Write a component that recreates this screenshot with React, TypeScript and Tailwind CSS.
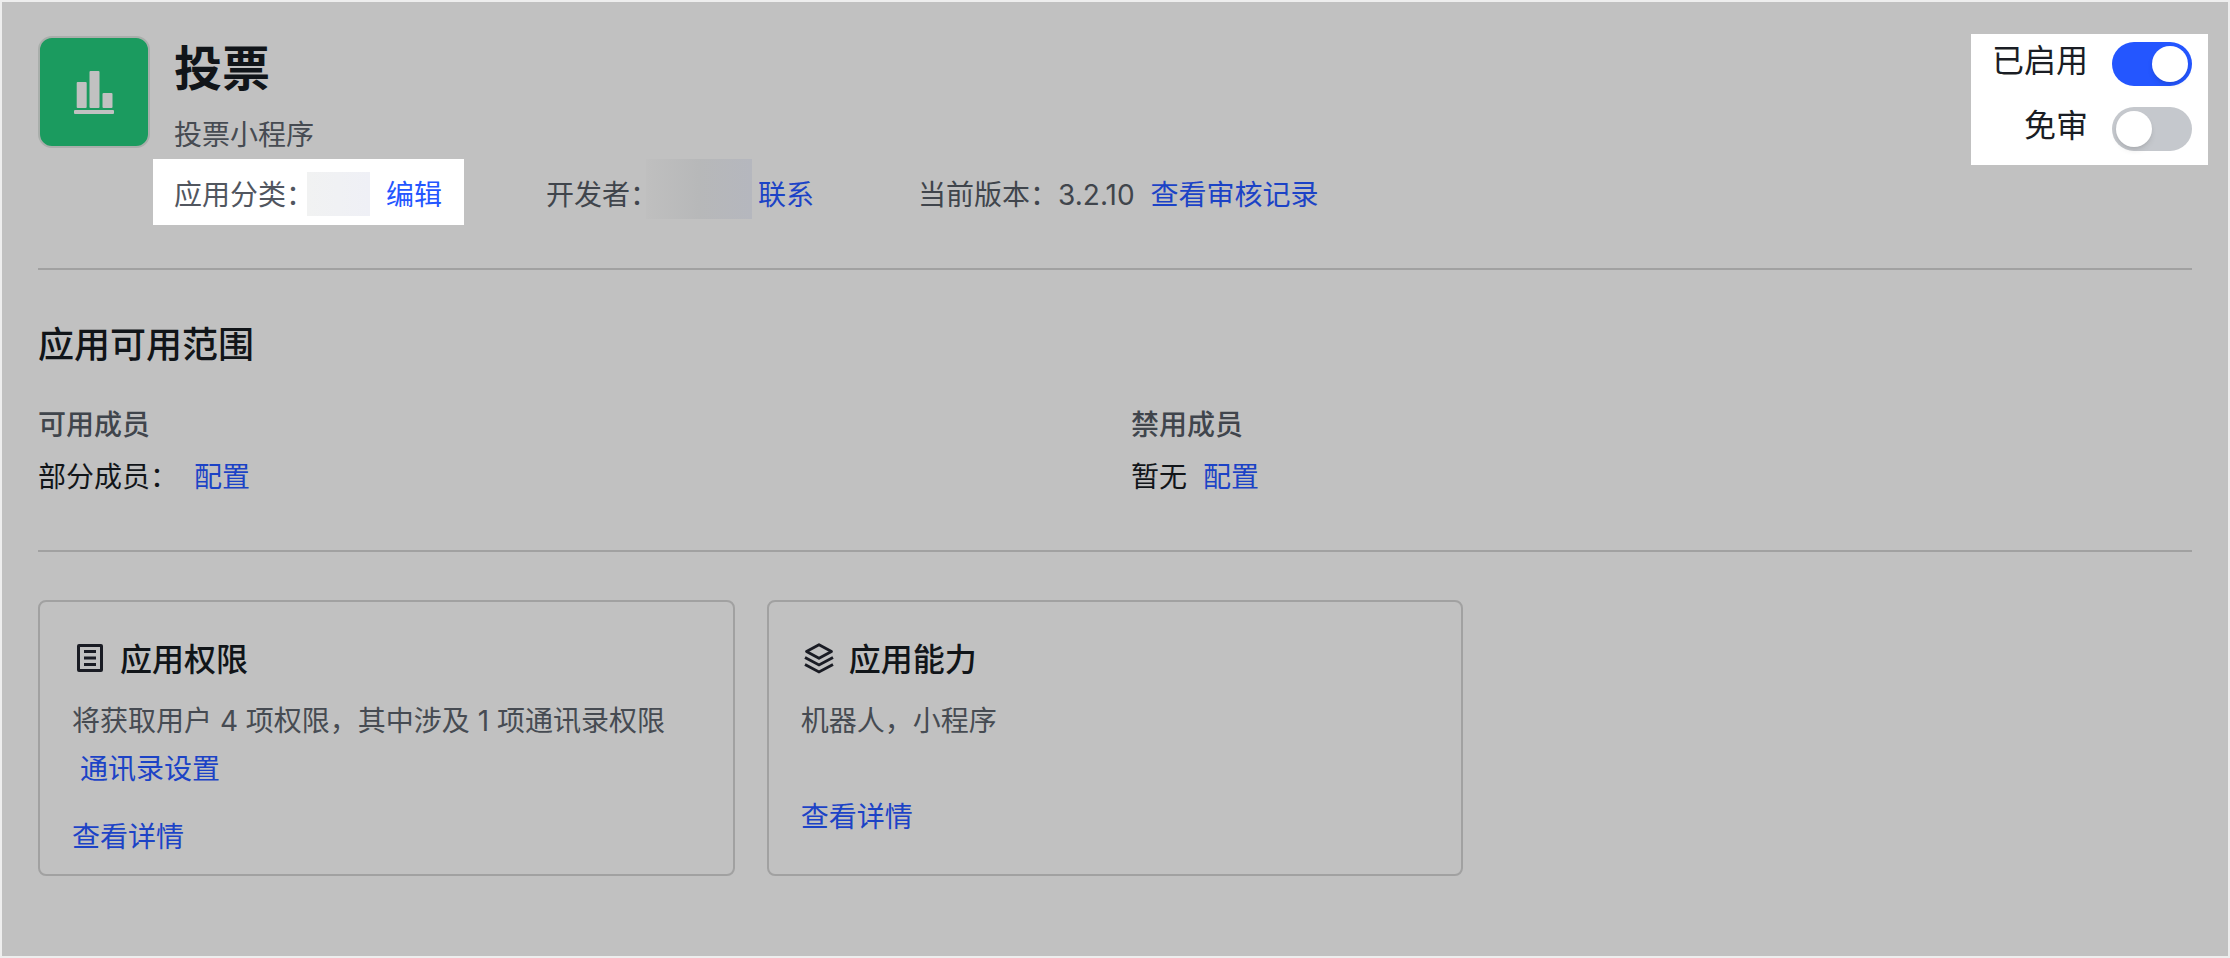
import React, { useState } from 'react';

interface TextLinkProps {
  children: React.ReactNode;
  className?: string;
}

interface SwitchRowProps {
  id: string;
  label: string;
  checked: boolean;
  onChange: (value: boolean) => void;
}

interface InfoCardProps {
  icon: React.ReactNode;
  title: string;
  children: React.ReactNode;
}

const TextLink: React.FC<TextLinkProps> = ({ children, className = 'text-[#1c43c6]' }) => (
  <a href="#" className={`whitespace-nowrap hover:underline ${className}`}>
    {children}
  </a>
);

const SwitchRow: React.FC<SwitchRowProps> = ({ id, label, checked, onChange }) => (
  <div className="flex items-start justify-end gap-6">
    <label htmlFor={id} className="text-[32px] leading-[38px] text-[#1a1d24]">
      {label}
    </label>
    <input
      id={id}
      type="checkbox"
      role="switch"
      checked={checked}
      onChange={(e) => onChange(e.target.checked)}
      className="h-11 w-20 shrink-0 cursor-pointer appearance-none rounded-full bg-[#c5c8cd] p-1 transition before:block before:size-9 before:rounded-full before:bg-white before:shadow-md before:transition checked:bg-[#2456ff] checked:before:translate-x-9"
    />
  </div>
);

const PollIcon: React.FC = () => (
  <svg viewBox="0 0 40 44" className="h-11 w-10" fill="#c1c1c1" aria-hidden="true">
    <rect x="2.700" y="12" width="10" height="26" rx="1" />
    <rect x="15.500" y="1" width="10" height="37" rx="1" />
    <rect x="28.500" y="23" width="10" height="15" rx="1" />
    <rect x="0" y="40" width="40" height="4" rx="1" />
  </svg>
);

const PermissionIcon: React.FC = () => (
  <svg viewBox="0 0 36 36" className="size-9" fill="none" stroke="#1a1c24" strokeWidth="3" aria-hidden="true">
    <rect x="6.5" y="3.5" width="23" height="25" rx="0.5" />
    <path d="M12 9.500h12M12 16h12M12 22.500h12" />
  </svg>
);

const AbilityIcon: React.FC = () => (
  <svg viewBox="0 0 36 36" className="size-9" fill="none" stroke="#1a1c24" strokeWidth="2.8" aria-hidden="true">
    <path d="M18 2.700 30.500 9.500 18 16.300 5.500 9.500z" strokeLinejoin="round" />
    <path d="M4 15.500 18 23 32 15.500M4 22.500 18 30 32 22.500" />
  </svg>
);

const InfoCard: React.FC<InfoCardProps> = ({ icon, title, children }) => (
  <section className="rounded-lg border-2 border-[#a1a1a1] px-8 pt-[34px] pb-[17px]">
    <h3 className="flex items-center gap-3 text-[32px] leading-[48px] font-medium text-[#111519]">
      {icon}
      {title}
    </h3>
    <p className="mt-[13px] min-h-[76px] leading-[48px] text-[#464b52]">{children}</p>
    <div className="mt-6">
      <TextLink>查看详情</TextLink>
    </div>
  </section>
);

const App: React.FC = () => {
  const [enabled, setEnabled] = useState<boolean>(true);
  const [skipReview, setSkipReview] = useState<boolean>(false);

  return (
    <div className="flex min-h-screen bg-[#eeeeee] p-0.5 font-[Inter,'Noto_Sans_CJK_SC',sans-serif] text-[28px] leading-10 text-[#111519]">
      <main className="flex-1 bg-[#c1c1c1] px-9 pt-8 pb-20">
        <header className="flex items-start justify-between border-b-2 border-[#a1a1a1] pb-[43px]">
          <div className="flex items-start gap-6 pt-0.5">
            <div className="flex size-28 shrink-0 items-center justify-center rounded-[14px] border-2 border-[#a9aeab] bg-[#1b9b5f]">
              <PollIcon />
            </div>
            <div className="pt-[5px]">
              <h1 className="text-5xl leading-[56px] font-bold">投票</h1>
              <p className="mt-[18px] text-[#464b52]">投票小程序</p>
              <div className="mt-1 flex items-start text-[#40454c]">
                {/* 高亮区域 */}
                <div className="-ml-[21px] flex h-[66px] items-center bg-white pt-[14px] pr-[22px] pb-2 pl-[21px] text-[#51565f]">
                  <span>应用分类：</span>
                  <span className="-mt-0.5 mr-4 -ml-[7px] h-11 w-[63px] bg-gradient-to-r from-[#f1f2f2] to-[#eff0f6]" />
                  <TextLink className="text-[#2456ff]">编辑</TextLink>
                </div>
                <div className="ml-[82px] flex h-[66px] items-center pt-[14px] pb-2">
                  <span>开发者：</span>
                  <span className="-mt-4 mr-1.5 -mb-1 -ml-3 h-15 w-[106px] bg-gradient-to-r from-[#bfbfbf] via-[#b7b8b9] to-[#b5b7be]" />
                  <TextLink>联系</TextLink>
                </div>
                <div className="ml-[104px] flex h-[66px] items-center pt-[14px] pb-2">
                  <span>当前版本：</span>
                  <span className="mr-4">3.2.10</span>
                  <TextLink>查看审核记录</TextLink>
                </div>
              </div>
            </div>
          </div>

          <div className="-mr-4 flex shrink-0 flex-col gap-[21px] bg-white pt-2 pr-4 pb-[14px] pl-[21px]">
            <SwitchRow id="enabled" label="已启用" checked={enabled} onChange={setEnabled} />
            <SwitchRow id="skip-review" label="免审" checked={skipReview} onChange={setSkipReview} />
          </div>
        </header>

        <section className="border-b-2 border-[#a1a1a1] pt-[51px] pb-[53px]">
          <h2 className="text-4xl leading-[48px] font-medium">应用可用范围</h2>
          <div className="mt-9 grid grid-cols-2 gap-8">
            <div>
              <h3 className="font-medium text-[#40454c]">可用成员</h3>
              <div className="mt-3 flex gap-4">
                <span>部分成员：</span>
                <TextLink>配置</TextLink>
              </div>
            </div>
            <div>
              <h3 className="font-medium text-[#40454c]">禁用成员</h3>
              <div className="mt-3 flex gap-4">
                <span>暂无</span>
                <TextLink>配置</TextLink>
              </div>
            </div>
          </div>
        </section>

        <div className="mt-12 grid grid-cols-3 items-stretch gap-8">
          <InfoCard icon={<PermissionIcon />} title="应用权限">
            将获取用户 4 项权限，其中涉及 1 项通讯录权限{' '}
            <span className="inline-block pl-2">
              <TextLink>通讯录设置</TextLink>
            </span>
          </InfoCard>
          <InfoCard icon={<AbilityIcon />} title="应用能力">
            机器人，小程序
          </InfoCard>
        </div>
      </main>
    </div>
  );
};

export default App;
